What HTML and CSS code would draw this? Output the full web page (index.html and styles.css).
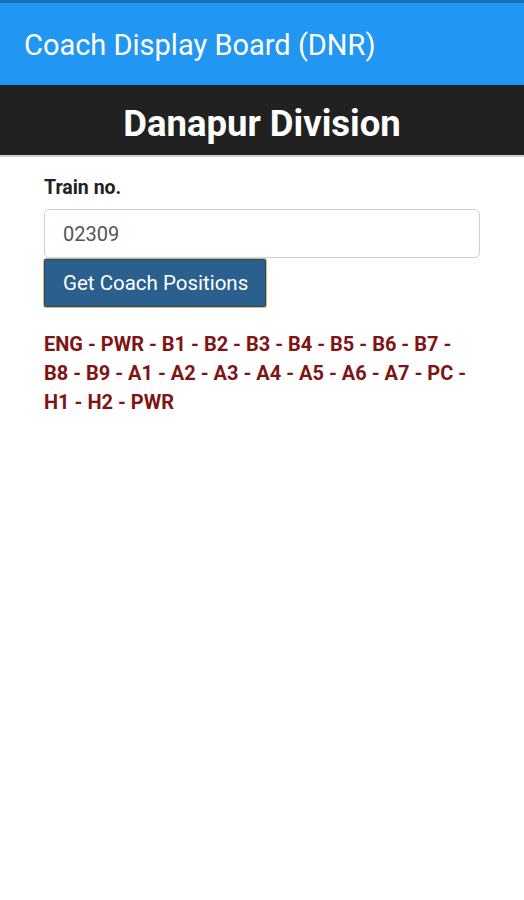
FILE: index.html
```html
<!DOCTYPE html>
<html lang="en">
<head>
<meta charset="utf-8">
<title>Coach Display Board (DNR)</title>
<link rel="stylesheet" href="styles.css">
</head>
<body>
<header class="appbar">
  <h1 class="appbar-title">Coach Display Board (DNR)</h1>
</header>
<div class="division">Danapur Division</div>
<main class="content">
  <label class="label" for="train">Train no.</label>
  <div class="field">02309</div>
  <button class="btn" type="button">Get Coach Positions</button>
  <p class="coaches">ENG - PWR - B1 - B2 - B3 - B4 - B5 - B6 - B7 - B8 - B9 - A1 - A2 - A3 - A4 - A5 - A6 - A7 - PC - H1 - H2 - PWR</p>
</main>
</body>
</html>
```
FILE: styles.css
```css
* { box-sizing: border-box; }
html, body { margin: 0; padding: 0; background: #fff; }
body { font-family: Roboto, "Noto Sans", sans-serif; }

.appbar {
  background: #2196f3;
  border-top: 3px solid #1b6fb5;
  height: 85px;
  display: flex;
  align-items: center;
  padding: 0 24px;
}
.appbar-title {
  margin: 0;
  color: #fff;
  font-size: 29px;
  font-weight: 400;
  padding-top: 2px;
}

.division {
  background: #212121;
  color: #fff;
  height: 72px;
  display: flex;
  align-items: center;
  justify-content: center;
  font-size: 36.5px;
  font-weight: 700;
  padding-top: 6px;
  border-bottom: 2px solid #cfcfcf;
}

.content {
  padding: 19px 44px;
  display: flex;
  flex-direction: column;
  align-items: flex-start;
}
.label {
  font-size: 19.5px;
  font-weight: 700;
  color: #222;
  margin-bottom: 10px;
}
.field {
  width: 100%;
  height: 49px;
  border: 1px solid #cfcfcf;
  border-radius: 5px;
  padding: 0 18px;
  display: flex;
  align-items: center;
  font-size: 20px;
  color: #555;
}
.btn {
  margin-left: -1px;
  height: 50px;
  width: 224px;
  background: #2a5f8e;
  color: #fff;
  font-family: Roboto, "Noto Sans", sans-serif;
  font-size: 20.5px;
  text-align: left;
  border: 1px solid #e0bd6a;
  box-shadow: inset 0 0 0 1px #1f4a70;
  border-radius: 3px;
  padding: 0 0 0 19px;
}
.coaches {
  margin: 22px 0 0;
  color: #7f1414;
  font-weight: 700;
  font-size: 20px;
  line-height: 29px;
  max-width: 436px;
}
```
